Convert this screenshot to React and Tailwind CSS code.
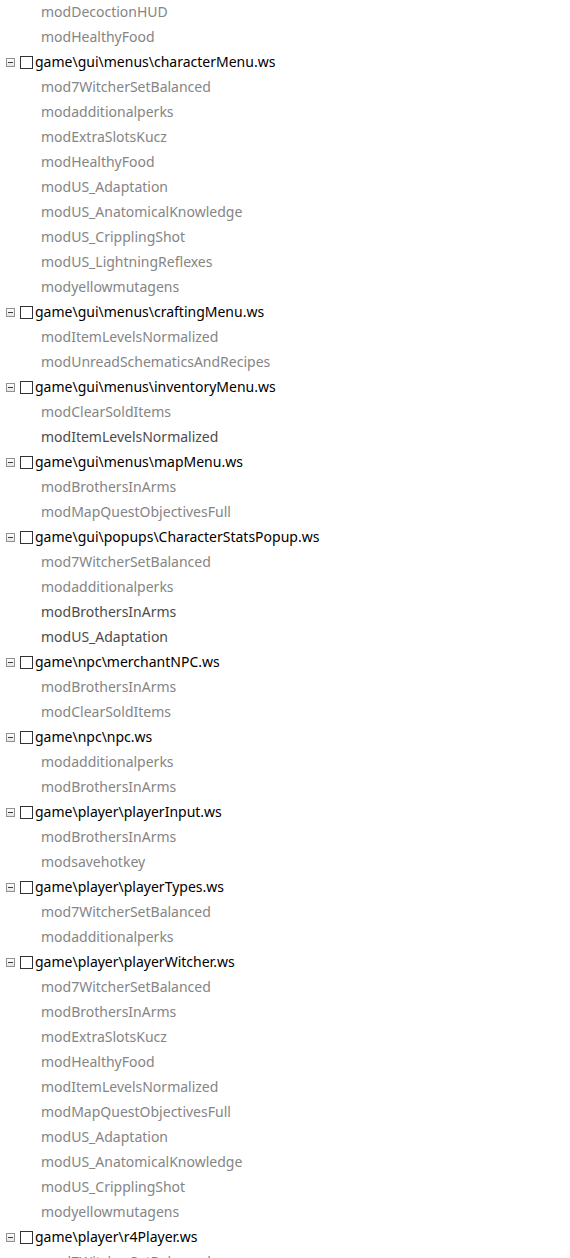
import React from 'react';

const tree = [
  { file: null, mods: [['modDecoctionHUD'], ['modHealthyFood']] },
  {
    file: 'game\\gui\\menus\\characterMenu.ws',
    mods: [
      ['mod7WitcherSetBalanced'],
      ['modadditionalperks'],
      ['modExtraSlotsKucz'],
      ['modHealthyFood'],
      ['modUS_Adaptation'],
      ['modUS_AnatomicalKnowledge'],
      ['modUS_CripplingShot'],
      ['modUS_LightningReflexes'],
      ['modyellowmutagens'],
    ],
  },
  {
    file: 'game\\gui\\menus\\craftingMenu.ws',
    mods: [['modItemLevelsNormalized'], ['modUnreadSchematicsAndRecipes']],
  },
  {
    file: 'game\\gui\\menus\\inventoryMenu.ws',
    mods: [['modClearSoldItems'], ['modItemLevelsNormalized', true]],
  },
  {
    file: 'game\\gui\\menus\\mapMenu.ws',
    mods: [['modBrothersInArms'], ['modMapQuestObjectivesFull']],
  },
  {
    file: 'game\\gui\\popups\\CharacterStatsPopup.ws',
    mods: [
      ['mod7WitcherSetBalanced'],
      ['modadditionalperks'],
      ['modBrothersInArms', true],
      ['modUS_Adaptation', true],
    ],
  },
  {
    file: 'game\\npc\\merchantNPC.ws',
    mods: [['modBrothersInArms'], ['modClearSoldItems']],
  },
  {
    file: 'game\\npc\\npc.ws',
    mods: [['modadditionalperks'], ['modBrothersInArms']],
  },
  {
    file: 'game\\player\\playerInput.ws',
    mods: [['modBrothersInArms'], ['modsavehotkey']],
  },
  {
    file: 'game\\player\\playerTypes.ws',
    mods: [['mod7WitcherSetBalanced'], ['modadditionalperks']],
  },
  {
    file: 'game\\player\\playerWitcher.ws',
    mods: [
      ['mod7WitcherSetBalanced'],
      ['modBrothersInArms'],
      ['modExtraSlotsKucz'],
      ['modHealthyFood'],
      ['modItemLevelsNormalized'],
      ['modMapQuestObjectivesFull'],
      ['modUS_Adaptation'],
      ['modUS_AnatomicalKnowledge'],
      ['modUS_CripplingShot'],
      ['modyellowmutagens'],
    ],
  },
  {
    file: 'game\\player\\r4Player.ws',
    mods: [['mod7WitcherSetBalanced']],
  },
];

function Expander() {
  return (
    <span className="w-[9px] h-[9px] ml-[6px] border border-[#919191] bg-gradient-to-b from-white to-[#e6e6e6] flex items-center justify-center">
      <span className="w-[5px] h-px bg-[#3b3b3b]" />
    </span>
  );
}

function FileRow({ name }) {
  return (
    <div className="h-[25px] flex items-center">
      <Expander />
      <span className="w-[13px] h-[13px] ml-[5px] border border-[#333] bg-white" />
      <span className="ml-[2px] pb-[2px] text-black leading-none">{name}</span>
    </div>
  );
}

function ModRow({ name, dark }) {
  return (
    <div className={`h-[25px] flex items-center pl-[41px] pb-[2px] leading-none ${dark ? 'text-[#4b4b4b]' : 'text-[#858585]'}`}>
      {name}
    </div>
  );
}

export default function App() {
  return (
    <div
      className="w-[570px] h-[1258px] overflow-hidden bg-white text-[14px]"
      style={{ fontFamily: '"Noto Sans", "Open Sans", sans-serif' }}
    >
      {tree.map((group, i) => (
        <div key={i}>
          {group.file && <FileRow name={group.file} />}
          {group.mods.map(([m, dark], j) => (
            <ModRow key={j} name={m} dark={dark} />
          ))}
        </div>
      ))}
    </div>
  );
}
